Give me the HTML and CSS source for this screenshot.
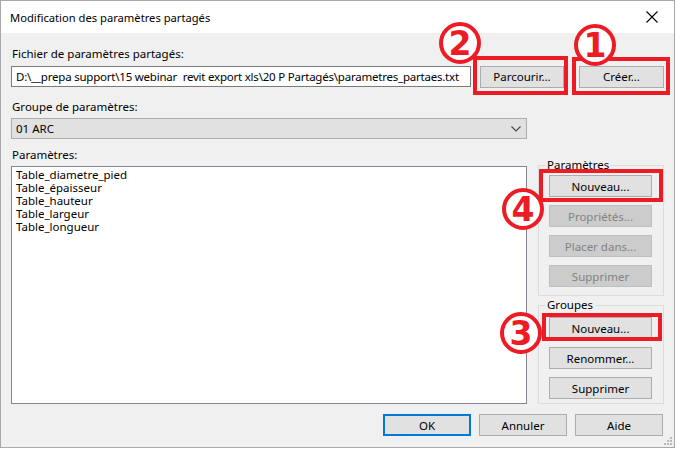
FILE: index.html
```html
<!DOCTYPE html>
<html lang="fr">
<head>
<meta charset="utf-8">
<title>Modification des paramètres partagés</title>
<link rel="stylesheet" href="styles.css">
</head>
<body>
<div class="window">
  <div class="titlebar">
    <span class="title">Modification des paramètres partagés</span>
    <svg class="close" width="12" height="12" viewBox="0 0 12 12"><path d="M0.5 0.5 L11.5 11.5 M11.5 0.5 L0.5 11.5" stroke="#000" stroke-width="1.1" fill="none"/></svg>
  </div>
  <div class="content">
    <div class="label l-file">Fichier de paramètres partagés:</div>
    <div class="file-row">
      <div class="input">D:\__prepa support\15 webinar&nbsp; revit export xls\20 P Partagés\parametres_partaes.txt</div>
      <div class="btn btn-browse">Parcourir...</div>
      <div class="btn btn-create">Créer...</div>
    </div>
    <div class="label l-group">Groupe de paramètres:</div>
    <div class="select">
      <span>01 ARC</span>
      <svg class="chev" width="10" height="6" viewBox="0 0 10 6"><path d="M0.5 0.5 L5 5 L9.5 0.5" stroke="#444" stroke-width="1.1" fill="none"/></svg>
    </div>
    <div class="label l-params">Paramètres:</div>
    <div class="main">
      <div class="listbox">
        <div>Table_diametre_pied</div>
        <div>Table_épaisseur</div>
        <div>Table_hauteur</div>
        <div>Table_largeur</div>
        <div>Table_longueur</div>
      </div>
      <div class="side">
        <div class="groupbox gb-params">
          <span class="gb-label">Paramètres</span>
          <div class="btn gbtn">Nouveau...</div>
          <div class="btn gbtn disabled">Propriétés...</div>
          <div class="btn gbtn disabled">Placer dans...</div>
          <div class="btn gbtn disabled">Supprimer</div>
        </div>
        <div class="groupbox gb-groups">
          <span class="gb-label">Groupes</span>
          <div class="btn gbtn">Nouveau...</div>
          <div class="btn gbtn">Renommer...</div>
          <div class="btn gbtn">Supprimer</div>
        </div>
      </div>
    </div>
    <div class="footer">
      <div class="btn fbtn default">OK</div>
      <div class="btn fbtn">Annuler</div>
      <div class="btn fbtn">Aide</div>
    </div>
  </div>

  <svg class="grip" width="10" height="10" viewBox="0 0 10 10">
    <rect x="7" y="1" width="2" height="2" fill="#b8b8b8"/>
    <rect x="4" y="4" width="2" height="2" fill="#b8b8b8"/>
    <rect x="7" y="4" width="2" height="2" fill="#b8b8b8"/>
    <rect x="1" y="7" width="2" height="2" fill="#b8b8b8"/>
    <rect x="4" y="7" width="2" height="2" fill="#b8b8b8"/>
    <rect x="7" y="7" width="2" height="2" fill="#b8b8b8"/>
  </svg>

  <div class="hl hl-create"></div>
  <div class="hl hl-browse"></div>
  <div class="hl hl-pnew"></div>
  <div class="hl hl-gnew"></div>

  <svg class="num n1" width="46" height="46" viewBox="0 0 46 46"><circle cx="23" cy="23" r="19" fill="#fff" stroke="#ed1c24" stroke-width="4"/><text x="23" y="35" text-anchor="middle">1</text></svg>
  <svg class="num n2" width="46" height="46" viewBox="0 0 46 46"><circle cx="23" cy="23" r="19" fill="#fff" stroke="#ed1c24" stroke-width="4"/><text x="23" y="35" text-anchor="middle">2</text></svg>
  <svg class="num n3" width="46" height="46" viewBox="0 0 46 46"><circle cx="23" cy="23" r="19" fill="#fff" stroke="#ed1c24" stroke-width="4"/><text x="23" y="35" text-anchor="middle">3</text></svg>
  <svg class="num n4" width="46" height="46" viewBox="0 0 46 46"><circle cx="23" cy="23" r="19" fill="#fff" stroke="#ed1c24" stroke-width="4"/><text x="23" y="35" text-anchor="middle">4</text></svg>
</div>
</body>
</html>
```

FILE: styles.css
```css
html, body {
  margin: 0;
  padding: 0;
  background: #ffffff;
}
body {
  font-family: "Noto Sans", "Liberation Sans", sans-serif;
  font-size: 11.5px;
  color: #000;
}
.window {
  position: relative;
  width: 673px;
  height: 446px;
  border: 1px solid #a8a8a8;
  background: #f0f0f0;
  display: flex;
  flex-direction: column;
  overflow: hidden;
}
.titlebar {
  height: 32px;
  background: #ffffff;
  display: flex;
  align-items: center;
  justify-content: space-between;
  padding: 0 16px 0 9px;
  flex: none;
}
.title {
  font-size: 11.2px;
}
.close {
  display: block;
}
.content {
  padding: 0 10px 0 10px;
  display: flex;
  flex-direction: column;
}
.label {
  height: 14px;
  line-height: 14px;
  padding-left: 1px;
}
.l-file { margin-top: 14px; }
.l-group { margin-top: 12px; }
.l-params { margin-top: 9px; }
.file-row {
  display: flex;
  align-items: center;
  margin-top: 4px;
  height: 23px;
}
.input {
  box-sizing: border-box;
  width: 460px;
  height: 21px;
  border: 1px solid #7a7a7a;
  background: #fff;
  line-height: 19px;
  padding-left: 4px;
  white-space: nowrap;
  overflow: hidden;
  letter-spacing: -0.22px;
}
.btn {
  box-sizing: border-box;
  height: 22px;
  border: 1px solid #adadad;
  background: #e1e1e1;
  display: flex;
  align-items: center;
  justify-content: center;
  white-space: nowrap;
}
.btn-browse { width: 84px; margin-left: 9px; }
.btn-create { width: 85px; margin-left: 15px; }
.select {
  box-sizing: border-box;
  margin-top: 4px;
  width: 516px;
  height: 21px;
  border: 1px solid #adadad;
  background: #e1e1e1;
  display: flex;
  align-items: center;
  justify-content: space-between;
  padding: 0 5px 0 4px;
}
.chev { display: block; }
.main {
  display: flex;
  margin-top: 4px;
  height: 238px;
}
.listbox {
  box-sizing: border-box;
  width: 516px;
  height: 238px;
  border: 1px solid #828790;
  background: #fff;
  padding: 1px 4px;
  line-height: 13px;
}
.side {
  margin-left: 11px;
  width: 126px;
  display: flex;
  flex-direction: column;
}
.groupbox {
  position: relative;
  box-sizing: border-box;
  border: 1px solid #dcdcdc;
  display: flex;
  flex-direction: column;
  gap: 8px;
  padding: 9px 11px 0 10px;
}
.gb-params { height: 131px; margin-top: -1px; }
.gb-groups { height: 99px; margin-top: 9px; padding-top: 11px; }
.gb-label {
  position: absolute;
  top: -8px;
  left: 6px;
  padding: 0 2px;
  background: #f0f0f0;
  line-height: 14px;
}
.gbtn { width: 103px; }
.disabled {
  background: #cccccc;
  border-color: #bfbfbf;
  color: #838383;
}
.footer {
  display: flex;
  justify-content: flex-end;
  gap: 8px;
  margin-top: 10px;
  padding-right: 1px;
}
.fbtn { width: 88px; }
.default {
  border: 2px solid #0078d7;
}
.grip {
  position: absolute;
  right: 1px;
  bottom: 1px;
}
.hl {
  position: absolute;
  box-sizing: border-box;
  border: 4px solid #ed1c24;
}
.hl-create { left: 571px; top: 56px; width: 98px; height: 38px; }
.hl-browse { left: 472px; top: 55px; width: 95px; height: 39px; }
.hl-pnew { left: 538px; top: 168px; width: 124px; height: 33px; }
.hl-gnew { left: 541px; top: 312px; width: 120px; height: 28px; }
.num {
  position: absolute;
  display: block;
}
.num text {
  font-family: "DejaVu Sans", "Liberation Sans", sans-serif;
  font-weight: 700;
  font-size: 33px;
  fill: #ed1c24;
}
.n1 { left: 571px; top: 21px; }
.n2 { left: 436px; top: 19px; }
.n3 { left: 497px; top: 309px; }
.n4 { left: 499px; top: 185px; }
```
